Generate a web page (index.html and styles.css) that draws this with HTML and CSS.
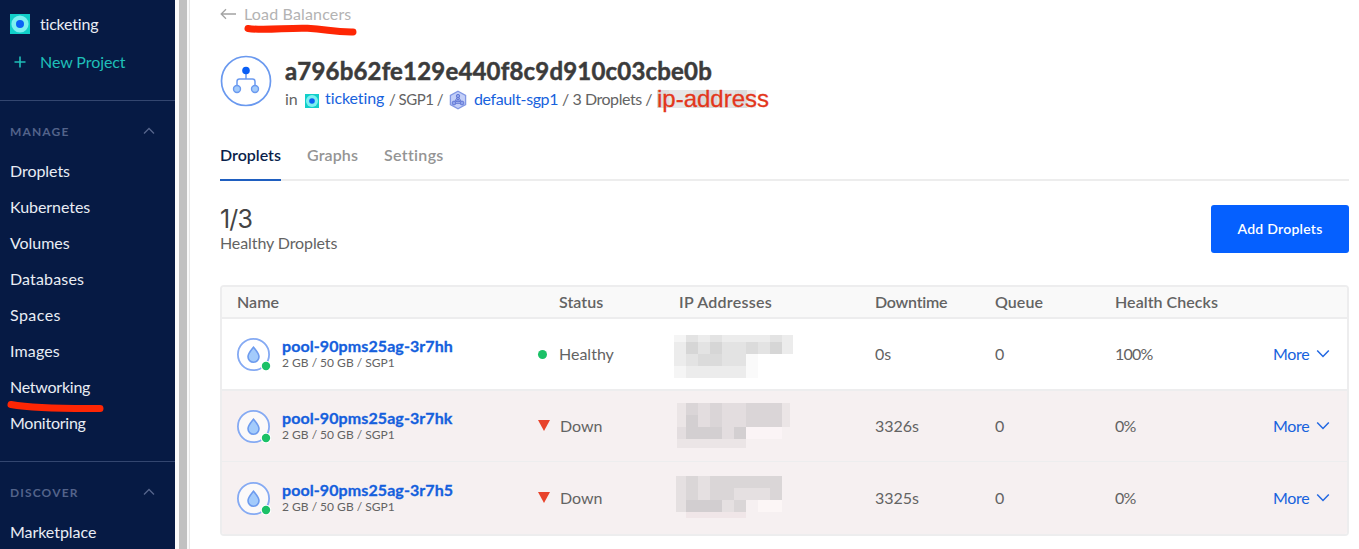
FILE: index.html
```
<!DOCTYPE html>
<html lang="en">
<head>
<meta charset="utf-8">
<title>Load Balancer</title>
<link rel="stylesheet" href="styles.css">
</head>
<body>
<svg width="0" height="0" class="defs">
  <symbol id="project" viewBox="0 0 20 20">
    <rect width="20" height="20" fill="#10cfc9"/>
    <circle cx="10" cy="10" r="8.6" fill="#7df0f0"/>
    <circle cx="10" cy="10" r="4" fill="#0a62f5"/>
  </symbol>
  <symbol id="droplet" viewBox="0 0 34 34">
    <circle cx="16.5" cy="16.5" r="15.6" fill="#fff" fill-opacity=".6" stroke="#85aaf3" stroke-width="1.8"/>
    <path d="M16.5 9.2C18.4 11.7 22 15.5 22 18.8a5.5 5.5 0 0 1-11 0c0-3.3 3.600-7.100 5.500-9.600z" fill="#a3cbfb" stroke="#6d9bee" stroke-width="1.6"/>
    <circle cx="29" cy="28" r="5.300" fill="#fff"/>
    <circle cx="29" cy="28" r="4.200" fill="#1bc167"/>
  </symbol>
  <symbol id="up" viewBox="0 0 12 8"><path d="M1 6.500 6 1.500 11 6.500" fill="none" stroke="#56658c" stroke-width="1.300"/></symbol>
  <symbol id="down" viewBox="0 0 14 10"><path d="M1.200 1.500 7 7.500 12.800 1.500" fill="none" stroke="#2268e2" stroke-width="1.500"/></symbol>
</svg>
<div class="app">
  <nav class="sidebar">
    <div class="project"><svg class="project-icon"><use href="#project"/></svg><span class="project-name">ticketing</span></div>
    <div class="project new"><svg class="plus" viewBox="0 0 20 20"><path d="M10 4.500v11M4.500 10h11" stroke="#1fbfb8" stroke-width="1.600"/></svg><span>New Project</span></div>
    <section class="group first">
      <h2>MANAGE<svg class="caret"><use href="#up"/></svg></h2>
      <a>Droplets</a>
      <a>Kubernetes</a>
      <a>Volumes</a>
      <a class="wide">Databases</a>
      <a class="spaces">Spaces</a>
      <a class="wide">Images</a>
      <a class="marked tight">Networking<svg class="nav-mark" viewBox="0 0 100 14"><path d="M5 4.500C22 7.500 55 8.800 94 8.500"/></svg></a>
      <a class="tight">Monitoring</a>
    </section>
    <section class="group">
      <h2 class="discover">DISCOVER<svg class="caret"><use href="#up"/></svg></h2>
      <a>Marketplace</a>
    </section>
  </nav>
  <div class="gutter"><i></i></div>
  <main>
    <div class="back"><svg viewBox="0 0 16 12"><path d="M16 6H1.500M6 1.300 1.200 6 6 10.700" fill="none" stroke="#a3a3a3" stroke-width="1.300"/></svg><a class="marked">Load Balancers<svg class="back-mark" viewBox="0 0 116 16"><path d="M5.500 6.500C22 9 45 5.500 65 6.300S90 10.300 110.500 10"/></svg></a></div>
    <header>
      <svg class="balancer" viewBox="0 0 52 52">
        <circle cx="26" cy="26" r="24.500" fill="#fff" stroke="#6a99ef" stroke-width="1.700"/>
        <path d="M26 17v7M17 31v-4.500a2.500 2.500 0 0 1 2.500-2.500h13a2.500 2.500 0 0 1 2.500 2.500V31" fill="none" stroke="#6a99ef" stroke-width="1.500"/>
        <circle cx="26" cy="15.500" r="3.800" fill="#0a5ff5"/>
        <circle cx="17" cy="34" r="3.500" fill="#a3cbfb" stroke="#6a99ef" stroke-width="1.400"/>
        <circle cx="35" cy="34" r="3.500" fill="#a3cbfb" stroke="#6a99ef" stroke-width="1.400"/>
      </svg>
      <div class="heading">
        <h1>a796b62fe129e440f8c9d910c03cbe0b</h1>
        <div class="crumbs">
          <span class="in">in</span>
          <svg class="mini"><use href="#project"/></svg>
          <a class="crumb-project">ticketing</a>
          <span class="region">/ SGP1 /</span>
          <svg class="vpc" viewBox="0 0 18 20">
            <path d="M9 1.200 16.600 5.500v9L9 18.800 1.400 14.500v-9z" fill="#c3cff8" stroke="#8197e4" stroke-width="1.300"/>
            <path d="M9 6 4.800 13.300h8.400zM9 6v4.500l-4.200 2.800M9 10.500l4.200 2.800" fill="none" stroke="#6379d4"/>
            <g fill="#8fa3ec" stroke="#5c73d2" stroke-width=".9"><circle cx="9" cy="6" r="1.700"/><circle cx="5" cy="13" r="1.900"/><circle cx="13" cy="13" r="1.900"/><circle cx="9" cy="10.700" r="1.300"/></g>
          </svg>
          <a class="vpc-name">default-sgp1</a>
          <span class="count">/ 3 Droplets /</span>
          <span class="address">ip-address</span>
        </div>
      </div>
    </header>
    <div class="tabs"><a class="active">Droplets</a><a class="graphs">Graphs</a><a class="settings">Settings</a></div>
    <div class="summary">
      <div><div class="ratio">1/3</div><div class="caption">Healthy Droplets</div></div>
      <button>Add Droplets</button>
    </div>
    <div class="table">
      <div class="row head"><span>Name</span><span class="status">Status</span><span class="ip">IP Addresses</span><span class="downtime">Downtime</span><span>Queue</span><span>Health Checks</span><span></span></div>
      <div class="row">
        <div class="node"><svg><use href="#droplet"/></svg><div><a>pool-90pms25ag-3r7hh</a><small>2 GB / 50 GB / SGP1</small></div></div>
        <div class="status"><i class="ok"></i>Healthy</div>
        <svg class="mask one" viewBox="674 335 119 43">
          <path fill="#f5f5f5" d="M674 335h12v7h-12zM674 366h12v12h-12z"/>
          <path fill="#ececec" d="M686 335h107v7H686zM674 342h12v24h-12zM782 342h11v12h-11zM686 366h60v12h-60z"/>
          <path fill="#e3e3e3" d="M686 335h12v7h-12zM710 335h12v7h-12zM770 335h12v7h-12zM698 342h84v12h-84zM686 354h60v12h-60z"/>
          <path fill="#d6d6d6" d="M686 342h12v12h-12zM710 342h12v12h-12zM770 342h12v12h-12z"/>
          <path fill="#dbdbdb" d="M746 342h12v12h-12zM698 354h24v12h-24z"/>
          <path fill="#fafafa" d="M746 354h12v24h-12z"/>
        </svg>
        <span>0s</span><span>0</span><span class="percent">100%</span><span class="more">More<svg><use href="#down"/></svg></span>
      </div>
      <div class="row bad">
        <div class="node"><svg><use href="#droplet"/></svg><div><a>pool-90pms25ag-3r7hk</a><small>2 GB / 50 GB / SGP1</small></div></div>
        <div class="status"><i class="fail"></i>Down</div>
        <svg class="mask two" viewBox="677 403 113 45">
          <path fill="#ebe5e6" d="M677 403h113v24H677zM677 439h69v9h-69z"/>
          <path fill="#e3dddf" d="M698 403h72v24h-72zM677 427h69v12h-69z"/>
          <path fill="#dad5d7" d="M686 403h12v12h-12zM710 403h12v24h-12zM746 403h36v24h-36z"/>
          <path fill="#d3cfd1" d="M686 415h12v24h-12zM698 427h24v12h-24zM734 427h12v12h-12z"/>
          <path fill="#fbf4f6" d="M746 427h36v12h-36z"/>
        </svg>
        <span>3326s</span><span>0</span><span class="percent">0%</span><span class="more">More<svg><use href="#down"/></svg></span>
      </div>
      <div class="row bad last">
        <div class="node"><svg><use href="#droplet"/></svg><div><a>pool-90pms25ag-3r7h5</a><small>2 GB / 50 GB / SGP1</small></div></div>
        <div class="status"><i class="fail"></i>Down</div>
        <svg class="mask three" viewBox="676 476 106 42">
          <path fill="#e5e0e1" d="M676 476h106v24H676zM676 500h70v12h-70z"/>
          <path fill="#dad6d7" d="M710 476h72v12h-72zM686 476h12v24h-12zM710 488h24v12h-24zM770 488h12v12h-12zM734 500h12v12h-12z"/>
          <path fill="#d2ced0" d="M686 500h36v12h-36z"/>
          <path fill="#f0e6e8" d="M686 512h60v6h-60z"/>
          <path fill="#fcf6f6" d="M758 500h24v12h-24z"/>
        </svg>
        <span>3325s</span><span>0</span><span class="percent">0%</span><span class="more">More<svg><use href="#down"/></svg></span>
      </div>
    </div>
  </main>
</div>
</body>
</html>
```
FILE: styles.css
```
* { box-sizing: border-box; }
body { margin: 0; background: #fff; color: #636363; font: 16px/20px Lato, "Open Sans", sans-serif; overflow: hidden; }
svg { display: block; flex: none; }
.defs { position: absolute; }
.app { display: flex; height: 549px; overflow: hidden; }
h1, h2 { margin: 0; }

.sidebar { width: 175px; flex: none; background: #061a44; color: #e9edf4; padding-top: 5px; overflow: hidden; }
.project { display: flex; align-items: center; height: 38px; padding-left: 10px; gap: 10px; }
.project span { padding-bottom: 1px; }
.project-icon, .plus { width: 20px; height: 20px; }
.project-name { letter-spacing: -.2px; }
.new { color: #1fbfb8; letter-spacing: -.08px; }
.group { border-top: 1px solid #33466f; padding-bottom: 20px; }
.first { margin-top: 19px; }
.group h2 { display: flex; align-items: center; justify-content: space-between; height: 52px; padding: 10px 20px 0 10px; font-size: 12px; font-weight: 700; letter-spacing: 1.15px; color: #53638a; }
.caret { width: 12px; height: 8px; margin-top: -2px; }
.group a { display: flex; align-items: center; height: 36px; padding: 0 0 1px 10px; letter-spacing: -.05px; }
.group .tight { letter-spacing: -.25px; }
.group .wide { letter-spacing: .15px; }
.group .spaces { letter-spacing: .45px; }
.marked { position: relative; }
.nav-mark, .back-mark { position: absolute; fill: none; stroke: #fe2604; stroke-width: 7px; stroke-linecap: round; z-index: 2; }
.nav-mark { left: 5.5px; top: 31px; width: 100px; height: 14px; }

.gutter { width: 15px; flex: none; background: #fafafa; border-right: 1px solid #e6e6e6; padding-left: 4px; }
.gutter i { display: block; width: 8px; height: 100%; background: #c1c1c1; }

main { flex: 1; padding: 4px 10px 0 30px; }
.back { display: flex; align-items: center; height: 20px; gap: 8px; color: #b3b3b3; letter-spacing: .16px; }
.back > svg { width: 16px; height: 12px; }
.back .marked { margin-top: -1px; }
.back-mark { left: -2px; top: 18.5px; width: 117px; height: 16px; }

header { display: flex; margin-top: 30px; gap: 13px; }
.balancer { width: 52px; height: 52px; margin-top: 1px; }
h1 { font-size: 24px; line-height: 30px; margin-top: 2px; font-weight: 700; letter-spacing: .18px; color: #3b3b3b; -webkit-text-stroke: .5px #3b3b3b; }
.crumbs { display: flex; align-items: center; height: 26px; white-space: pre; }
.crumbs a, .more { color: #1762dd; }
.in { width: 20px; }
.mini { width: 14px; height: 14px; margin-top: 4px; }
.crumb-project { width: 64px; margin: -3px 0 0 6px; letter-spacing: -.1px; }
.region { width: 60px; font-size: 15px; letter-spacing: -.5px; }
.vpc { width: 18px; height: 20px; margin-top: 2px; }
.vpc-name { width: 88px; margin-left: 7px; letter-spacing: -.38px; }
.count { width: 95px; letter-spacing: -.45px; }
.address { height: 18px; line-height: 18px; width: 99px; margin-top: -1px; background: linear-gradient(90deg, #dedede 0 12px, #e6e6e6 12px 36px, #dadada 36px 60px, #e3e3e3 60px 78px, #dcdcdc 78px 90px, #eee 90px); font-family: "Liberation Sans", Arial, sans-serif; font-size: 24px; letter-spacing: 0; color: #e3371b; -webkit-text-stroke: .3px #e3371b; }

.tabs { display: flex; height: 49px; margin-top: 20px; border-bottom: 2px solid #ededed; font-weight: 600; color: #949494; padding-top: 13px; }
.tabs a { height: 36px; margin-right: 26px; }
.tabs .active { width: 61px; color: #0b1f4b; border-bottom: 2px solid #1f5fc0; }
.graphs { letter-spacing: .12px; }
.settings { letter-spacing: .3px; }

.summary { display: flex; justify-content: space-between; margin-top: 24px; height: 48px; }
.ratio { font: 400 25px/28px Inter, sans-serif; letter-spacing: -.9px; color: #444; }
.caption { line-height: 20px; letter-spacing: -.1px; }
button { width: 138px; height: 48px; border: 0; border-radius: 3px; background: #0560ff; color: #fff; font: 600 14px Lato, sans-serif; letter-spacing: .25px; padding: 0 0 1px; }

.table { margin-top: 32px; border: 2px solid #ededee; border-radius: 4px; overflow: hidden; }
.row { display: grid; grid-template-columns: 322px 120px 196px 120px 120px 158px 1fr; align-items: center; height: 72px; padding-left: 15px; border-bottom: 2px solid #ededee; }
.head { height: 32px; background: #f9f9f9; font-weight: 600; letter-spacing: .05px; }
.head span { margin-top: -1px; }
.head .ip { letter-spacing: .27px; }
.head .downtime { letter-spacing: -.25px; }
.percent { letter-spacing: -.8px; }
.bad { background: #f6f0f1; height: 71px; border-bottom-width: 1px; }
.last { height: 72px; border: 0; }
.node { display: flex; gap: 11px; align-items: center; }
.node svg { width: 34px; height: 34px; margin-top: 2px; }
.node a { display: block; font-weight: 700; line-height: 18px; letter-spacing: .09px; color: #155fdd; -webkit-text-stroke: .3px #155fdd; }
.node small { display: block; font-size: 12px; line-height: 16px; }
.status { position: relative; }
.ok, .fail { position: absolute; top: 6px; left: -21px; }
.ok { width: 9px; height: 9px; border-radius: 50%; background: #1bc167; }
.fail { border: 6.5px solid transparent; border-top: 11px solid #e8432b; border-bottom: 0; top: 4px; }
.bad .status { padding-left: 1px; }
.mask { align-self: start; shape-rendering: crispEdges; }
.one { width: 119px; height: 43px; margin: 16px 0 0 -5px; }
.two { width: 113px; height: 45px; margin: 12px 0 0 -2px; }
.three { width: 106px; height: 42px; margin: 14px 0 0 -3px; }
.more { display: flex; align-items: center; gap: 7px; letter-spacing: -.3px; }
.more svg { width: 14px; height: 10px; }
```
